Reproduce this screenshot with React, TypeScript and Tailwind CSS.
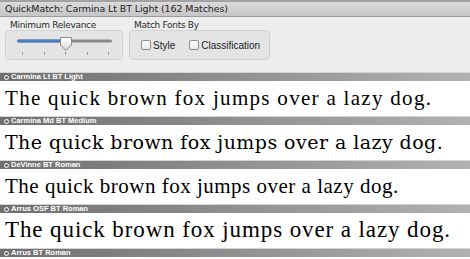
import React from 'react';

const rows = [
  { name: 'Carmina Lt BT Light', font: "text-[21px] tracking-[1.3px] font-['Liberation_Serif',serif]" },
  { name: 'Carmina Md BT Medium', font: "text-[19px] tracking-[0.45px] font-['DejaVu_Serif',serif]" },
  { name: 'DeVinne BT Roman', font: "text-[21px] tracking-[0.5px] font-['Liberation_Serif',serif]" },
  { name: 'Arrus OSF BT Roman', font: "text-[23px] tracking-[0.9px] font-['Liberation_Serif',serif]" },
];

const Checkbox = ({ label }: { label: string }) => (
  <label className="flex items-center gap-[2px]">
    <span className="w-[10px] h-[10px] rounded-[2px] border border-[#8f8f8f] bg-gradient-to-b from-white to-[#e8e8e8]" />
    <span className="text-[10px] text-[#222] font-['Liberation_Sans',sans-serif]">{label}</span>
  </label>
);

const Slider = () => (
  <svg width="118" height="30" viewBox="0 0 118 30">
    <rect x="11" y="8.5" width="95" height="3" rx="1.5" fill="#8a8a8a" />
    <rect x="11" y="8.5" width="50" height="3" rx="1.5" fill="#4a7fc1" />
    {[16, 38, 59, 81, 102].map((x) => (
      <rect key={x} x={x} y="21" width="1" height="3" fill="#9a9a9a" />
    ))}
    <defs>
      <linearGradient id="thumb" x1="0" y1="0" x2="0" y2="1">
        <stop offset="0" stopColor="#ffffff" />
        <stop offset="1" stopColor="#d6d6d6" />
      </linearGradient>
    </defs>
    <path d="M54.5 6.5 H65.5 V14 L60 19.5 L54.5 14 Z" fill="url(#thumb)" stroke="#8a8a8a" strokeWidth="1" />
  </svg>
);

const Header = ({ name }: { name: string }) => (
  <div className="h-[9px] border-t border-[#d4d4d4] bg-gradient-to-r from-[#6f6f6f] to-[#b2b2b2] flex items-center gap-[2px] pl-[4px]">
    <span className="w-[5px] h-[5px] rounded-full border border-white" />
    <span className="text-[7.5px] leading-[8px] font-bold text-white font-['Liberation_Sans',sans-serif]">{name}</span>
  </div>
);

export default function App() {
  return (
    <div className="w-[470px] h-[259px] overflow-hidden bg-white font-['DejaVu_Sans','Liberation_Sans',sans-serif]">
      <div className="h-[2px] bg-[#a2a2a2]" />
      <div className="h-[15px] bg-gradient-to-b from-[#dadada] to-[#c6c6c6] border-b border-[#9c9c9c] flex items-center px-[5px]">
        <span className="text-[9.5px] tracking-[-0.1px] text-[#1e1e1e]">QuickMatch: Carmina Lt BT Light (162 Matches)</span>
      </div>
      <div className="h-[55px] bg-[#ededed] flex gap-[6px] px-[5px] pt-[4px]">
        <div className="flex flex-col">
          <span className="h-[9px] leading-[9px] pl-[5px] text-[9px] tracking-[-0.3px] text-[#2a2a2a]">Minimum Relevance</span>
          <div className="w-[118px] h-[30px] rounded-[4px] border border-[#d2d2d2] bg-[#e4e4e4]">
            <Slider />
          </div>
        </div>
        <div className="flex flex-col">
          <span className="h-[9px] leading-[9px] pl-[5px] text-[9px] tracking-[-0.3px] text-[#2a2a2a]">Match Fonts By</span>
          <div className="w-[141px] h-[30px] rounded-[4px] border border-[#d2d2d2] bg-[#e4e4e4] flex items-center gap-[14px] pl-[11px]">
            <Checkbox label="Style" />
            <Checkbox label="Classification" />
          </div>
        </div>
      </div>
      {rows.map((r) => (
        <div key={r.name}>
          <Header name={r.name} />
          <div className={`h-[35px] flex items-center pl-[5px] text-black whitespace-nowrap ${r.font}`}>
            The quick brown fox jumps over a lazy dog.
          </div>
        </div>
      ))}
      <Header name="Arrus BT Roman" />
    </div>
  );
}
